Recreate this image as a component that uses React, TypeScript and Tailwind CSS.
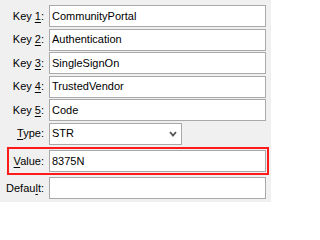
import { ReactNode } from "react";

const font = { fontFamily: '"Liberation Sans", Arial, sans-serif' };

const Label = ({ pre, u, post, w = "w-[44px]" }: { pre: string; u: string; post: string; w?: string }) => (
  <span className={`${w} shrink-0 text-right text-[11px] leading-none text-black`}>
    {pre}
    <u className="underline-offset-[2px]">{u}</u>
    {post}
  </span>
);

const Box = ({ children }: { children?: ReactNode }) => (
  <div className="flex h-[22px] flex-1 items-center border border-[#a9a9a9] bg-white pl-[2px] text-[11px] text-black">
    {children}
  </div>
);

const Row = ({ label, value }: { label: ReactNode; value?: string }) => (
  <div className="flex items-center gap-[5px] pr-[5px]">
    {label}
    <Box>{value}</Box>
  </div>
);

export default function App() {
  return (
    <div className="h-[202px] w-[271px] overflow-hidden bg-[#f0f0f0] pt-[5px]" style={font}>
      <div className="flex flex-col gap-[1.5px]">
        <Row label={<Label pre="Key " u="1" post=":" />} value="CommunityPortal" />
        <Row label={<Label pre="Key " u="2" post=":" />} value="Authentication" />
        <Row label={<Label pre="Key " u="3" post=":" />} value="SingleSignOn" />
        <Row label={<Label pre="Key " u="4" post=":" />} value="TrustedVendor" />
        <Row label={<Label pre="Key " u="5" post=":" />} value="Code" />

        {/* Type dropdown */}
        <div className="flex items-center gap-[5px]">
          <Label pre="" u="T" post="ype:" />
          <div className="flex h-[22px] w-[133px] items-center justify-between border border-[#a9a9a9] bg-white pl-[2px] pr-[4px] text-[11px] text-black">
            <span>STR</span>
            <svg width="8" height="6" viewBox="0 0 8 6">
              <polyline points="1,1 4,4.5 7,1" fill="none" stroke="#555" strokeWidth="1.8" />
            </svg>
          </div>
        </div>
      </div>

      {/* Highlighted value field */}
      <div className="ml-[7px] mr-[2px] mt-[2.5px] flex items-center gap-[5px] border-2 border-[#ff1a1a] py-px pr-px">
        <Label pre="" u="V" post="alue:" w="w-[35px]" />
        <Box>8375N</Box>
      </div>

      <div className="mt-[2px]">
        <Row label={<Label pre="Defau" u="l" post="t:" />} />
      </div>
    </div>
  );
}
